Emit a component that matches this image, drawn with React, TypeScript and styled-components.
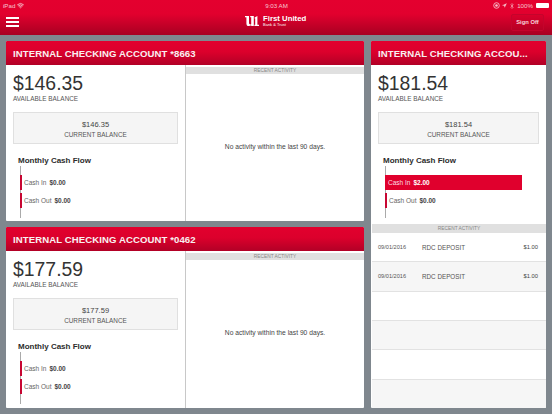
import React from "react";
import styled, { createGlobalStyle } from "styled-components";
import { Wifi, Navigation, Bluetooth } from "lucide-react";

const Global = createGlobalStyle`
  html, body { margin: 0; padding: 0; background: #7f878e; }
  * { box-sizing: border-box; }
  body { font-family: "Liberation Sans", Arial, sans-serif; color: #333; }
`;
const Page = styled.div`
  width: 552px; height: 414px; overflow: hidden; background: #7f878e;
  display: flex; flex-direction: column;
`;
const Header = styled.header`
  height: 35px; flex: none; background: linear-gradient(#e4002f 0%, #e2002e 40%, #a80022 100%);
  display: flex; flex-direction: column; color: #fff;
`;
const StatusBar = styled.div`
  height: 11px; padding: 0 2px 0 3px; display: grid; grid-template-columns: 1fr auto 1fr;
  align-items: center; font-size: 6.2px; color: #f6c6d0;
`;
const StatusSide = styled.div<{ $end?: boolean }>`
  display: flex; align-items: center; gap: 2px; justify-content: ${p => (p.$end ? "flex-end" : "flex-start")};
`;
const BatteryIcon = styled.span`
  width: 13px; height: 5px; background: #fff; border-radius: 1px; margin-left: 1px; margin-right: 1px;
`;
const NavBar = styled.div`
  flex: 1; position: relative; display: flex; align-items: center; justify-content: space-between;
  padding: 0 8px 2px 6px;
`;
const Burger = styled.div`
  width: 13px; display: flex; flex-direction: column; gap: 2px;
  span { display: block; height: 2px; background: #fff; }
`;
const Logo = styled.div`
  position: absolute; left: 245px; top: 4px; display: flex; align-items: center; gap: 4px;
`;
const LogoName = styled.div`
  display: flex; flex-direction: column; gap: 0; font-size: 7.8px; font-weight: 700; line-height: 8px;
`;
const LogoTagline = styled.span`
  font-size: 4px; font-weight: 400; line-height: 4px;
`;
const SignOff = styled.div`
  width: 33px; height: 17px; border: 1px solid #c4042c; border-radius: 2px; background: rgba(190, 0, 38, .18);
  display: flex; align-items: center; justify-content: center; font-size: 5.8px; font-weight: 700; color: #f7d5dc;
`;
const Main = styled.main`
  flex: 1; padding: 6px 6px 6px 6px; display: grid; grid-template-columns: 358px 175px; column-gap: 7px; min-height: 0;
`;
const LeftStack = styled.div`
  display: flex; flex-direction: column; gap: 6px;
`;
const Card = styled.section<{ $height: number }>`
  height: ${p => p.$height}px; background: #fff; display: flex; flex-direction: column; overflow: hidden; border-radius: 1px;
`;
const CardHeader = styled.h2`
  margin: 0; height: 24px; flex: none; padding: 0 7px; display: flex; align-items: center;
  background: linear-gradient(#e2002e 0%, #dc002c 45%, #b20026 100%);
  color: #f8f0f1; font-size: 9.6px; font-weight: 700; white-space: nowrap; letter-spacing: .08px;
`;
const CardRow = styled.div`
  flex: 1; display: flex; min-height: 0;
`;
const Summary = styled.div`
  width: 180px; flex: none; border-right: 1px solid #c8c8c8; padding: 7px 7px 0; display: flex; flex-direction: column;
`;
const Amount = styled.div`
  font-size: 19.4px; line-height: 22px; color: #333; height: 23px;
`;
const Label = styled.div`
  font-size: 6.4px; line-height: 8px; color: #555;
`;
const BalanceBox = styled.div`
  margin-top: 9px; height: 32px; background: #f5f5f5; border: 1px solid #e0e0e0; padding-top: 3px;
  display: flex; flex-direction: column; align-items: center; justify-content: center; gap: 2px;
  strong { font-weight: 400; font-size: 7.5px; line-height: 8px; color: #444; }
`;
const FlowTitle = styled.div`
  margin: 12px 0 0 5px; font-size: 8px; line-height: 9px; font-weight: 700; color: #2c2c2c;
`;
const Chart = styled.div`
  margin: 1px 0 0 7px; height: 52px; border-left: 1px solid #aaa; padding-top: 9px;
  display: flex; flex-direction: column; gap: 3px;
`;
const Bar = styled.div<{ $active?: boolean }>`
  height: 15px; display: flex; align-items: center; gap: 3px; font-size: 6.5px; white-space: nowrap;
  margin-left: -1px; padding-left: ${p => (p.$active ? "1px" : "2px")};
  border-left: 2px solid ${p => (p.$active ? "#e0002d" : "#c70632")};
  background: ${p => (p.$active ? "#e0002d" : "transparent")};
  width: ${p => (p.$active ? "137px" : "auto")};
  color: ${p => (p.$active ? "#fbdfe4" : "#666")};
  b { font-weight: 700; color: ${p => (p.$active ? "#fff" : "#444")}; }
`;
const Activity = styled.div`
  flex: 1; display: flex; flex-direction: column; min-width: 0; padding: 2px 0 0 0;
`;
const ActivityLabel = styled.div`
  height: 7px; flex: none; background: #e0e0e0; color: #888; font-size: 4.8px; line-height: 7px; text-align: center;
`;
const Empty = styled.div`
  flex: 1; display: flex; align-items: center; justify-content: center; font-size: 6.7px; color: #444; padding-bottom: 3px;
`;
const RightSummary = styled.div`
  padding: 7px 7px 0; height: 159px; flex: none; display: flex; flex-direction: column;
`;
const RightActivityLabel = styled(ActivityLabel)`
  height: 9px; line-height: 9px; margin: 0 0 0 1px;
`;
const Rows = styled.div`
  flex: 1; display: flex; flex-direction: column; padding-left: 1px;
`;
const Row = styled.div<{ $alt: boolean }>`
  flex: 1; display: flex; align-items: center; padding: 0 8px 0 6px; font-size: 6.1px; color: #555;
  background: ${p => (p.$alt ? "#f6f6f6" : "#fff")}; border-bottom: 1px solid #e2e2e2;
  &:last-child { border-bottom: 0; }
`;
const RowDate = styled.span` width: 44px; font-size: 5.6px; `;
const RowDesc = styled.span` flex: 1; font-size: 6.3px; `;
const RowAmount = styled.span` font-size: 5.8px; color: #444; `;

function CashFlow({ cashIn, active }: { cashIn: string; active?: boolean }) {
  return (
    <>
      <FlowTitle>Monthly Cash Flow</FlowTitle>
      <Chart>
        <Bar $active={active}>Cash In <b>{cashIn}</b></Bar>
        <Bar>Cash Out <b>$0.00</b></Bar>
      </Chart>
    </>
  );
}
function Balances({ value }: { value: string }) {
  return (
    <>
      <Amount>{value}</Amount>
      <Label>AVAILABLE BALANCE</Label>
      <BalanceBox>
        <strong>{value}</strong>
        <Label>CURRENT BALANCE</Label>
      </BalanceBox>
    </>
  );
}
function AccountCard({ id, value, height }: { id: string; value: string; height: number }) {
  return (
    <Card $height={height}>
      <CardHeader>INTERNAL CHECKING ACCOUNT *{id}</CardHeader>
      <CardRow>
        <Summary>
          <Balances value={value} />
          <CashFlow cashIn="$0.00" />
        </Summary>
        <Activity>
          <ActivityLabel>RECENT ACTIVITY</ActivityLabel>
          <Empty>No activity within the last 90 days.</Empty>
        </Activity>
      </CardRow>
    </Card>
  );
}

const rows = [
  ["09/01/2016", "RDC DEPOSIT", "$1.00"],
  ["09/01/2016", "RDC DEPOSIT", "$1.00"],
  ["", "", ""], ["", "", ""], ["", "", ""], ["", "", ""],
];

export default function App() {
  return (
    <Page>
      <Global />
      <Header>
        <StatusBar>
          <StatusSide>iPad <Wifi size={7} strokeWidth={3} /></StatusSide>
          <span>9:03 AM</span>
          <StatusSide $end>
            <svg width="7" height="7" viewBox="0 0 10 10"><circle cx="5" cy="5" r="4" fill="none" stroke="#f6c6d0" strokeWidth="1.2" /><circle cx="5" cy="5" r="1.8" fill="#f6c6d0" /></svg>
            <Navigation size={5} fill="#f6c6d0" strokeWidth={1} />
            <Bluetooth size={6} strokeWidth={2} />
            100%
            <BatteryIcon />
          </StatusSide>
        </StatusBar>
        <NavBar>
          <Burger><span /><span /><span /></Burger>
          <Logo>
            <svg width="14" height="10" viewBox="0 0 14 10" fill="#fff">
              <path d="M0 0H4V7C4 7.9 4.6 8.4 5.4 8.4C5.8 8.4 6 8.3 6.2 8.2V1.2H5.2V0H8.8V10H6.2V9.3C5.5 9.8 4.7 10 3.8 10C2.2 10 1.4 9 1.4 7.4V1.2H0Z" />
              <path d="M9.6 1.6L12.4 0V8.8H14V10H9.4V8.8H10.2V2.6H9.6Z" />
            </svg>
            <LogoName>First United<LogoTagline>Bank &amp; Trust</LogoTagline></LogoName>
          </Logo>
          <SignOff>Sign Off</SignOff>
        </NavBar>
      </Header>
      <Main>
        <LeftStack>
          <AccountCard id="8663" value="$146.35" height={180} />
          <AccountCard id="0462" value="$177.59" height={181} />
        </LeftStack>
        <Card $height={367}>
          <CardHeader>INTERNAL CHECKING ACCOU...</CardHeader>
          <RightSummary>
            <Balances value="$181.54" />
            <CashFlow cashIn="$2.00" active />
          </RightSummary>
          <RightActivityLabel>RECENT ACTIVITY</RightActivityLabel>
          <Rows>
            {rows.map((r, i) => (
              <Row key={i} $alt={i % 2 === 1}>
                <RowDate>{r[0]}</RowDate><RowDesc>{r[1]}</RowDesc><RowAmount>{r[2]}</RowAmount>
              </Row>
            ))}
          </Rows>
        </Card>
      </Main>
    </Page>
  );
}
